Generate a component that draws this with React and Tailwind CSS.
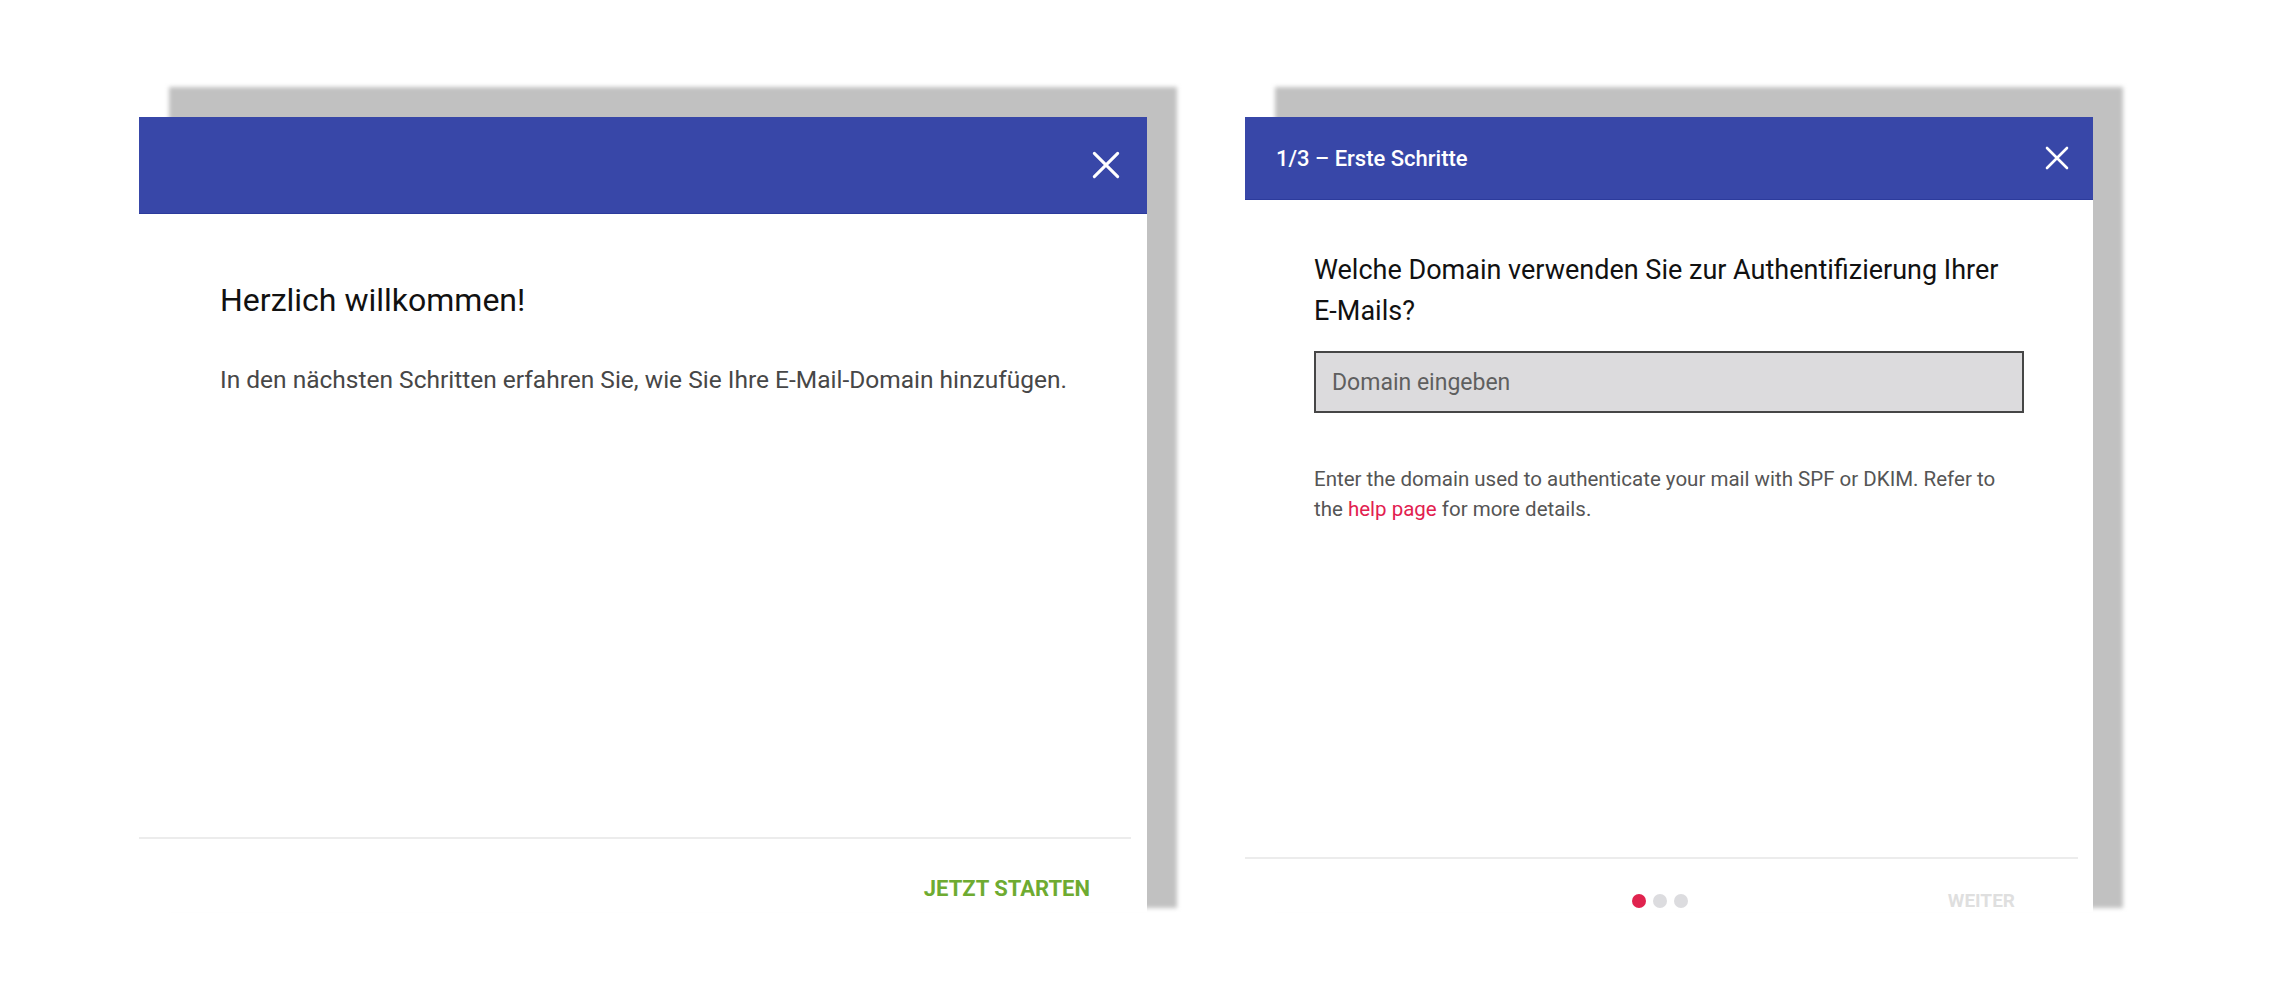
import React from 'react';

const CloseIcon = ({ size = 28 }) => (
  <svg width={size} height={size} viewBox="0 0 24 24" fill="none" stroke="white" strokeWidth="2.6" strokeLinecap="round">
    <path d="M2 2L22 22M22 2L2 22" />
  </svg>
);

// gray block that sits behind each dialog, shifted up and to the right
const Backdrop = () => (
  <div className="absolute -top-[30px] -right-[30px] left-[30px] bottom-[4px] bg-[#c1c1c1] blur-[2px]" />
);

const WelcomeDialog = () => (
  <div className="relative w-[1008px] h-[795px] shrink-0">
    <Backdrop />
    <div className="relative h-full bg-white flex flex-col">
      <div className="h-[97px] bg-[#3847a8] border-b border-[#2c3b9c] flex items-center justify-end pr-[27px]">
        <CloseIcon size={28} />
      </div>
      <div className="flex-1 pl-[81px] pt-[67px]">
        <h2 className="text-[32px] leading-[38px] text-[#111]">Herzlich willkommen!</h2>
        <p className="mt-[44px] text-[24.5px] leading-[33px] text-[#474747]">
          In den nächsten Schritten erfahren Sie, wie Sie Ihre E-Mail-Domain hinzufügen.
        </p>
      </div>
      <div className="h-[2px] bg-[#ececec] mr-[16px]" />
      <div className="h-[73px] flex justify-end pr-[57px] pt-[39px]">
        <button className="text-[22px] leading-[22px] font-bold text-[#6eab31] h-fit">JETZT STARTEN</button>
      </div>
    </div>
  </div>
);

const DomainDialog = () => (
  <div className="relative w-[848px] h-[795px] shrink-0">
    <Backdrop />
    <div className="relative h-full bg-white flex flex-col">
      <div className="h-[83px] bg-[#3847a8] border-b border-[#2c3b9c] flex items-center justify-between pl-[31px] pr-[24px]">
        <span className="text-[22px] font-medium text-white">1/3 – Erste Schritte</span>
        <CloseIcon size={24} />
      </div>
      <div className="flex-1 px-[69px] pt-[50px]">
        <h3 className="text-[27px] leading-[41px] text-[#111]">
          Welche Domain verwenden Sie zur Authentifizierung Ihrer <span className="whitespace-nowrap">E-Mails?</span>
        </h3>
        <input
          type="text"
          placeholder="Domain eingeben"
          className="mt-[19px] w-full h-[62px] bg-[#dcdbdd] border-2 border-[#464646] pl-4 text-[23px] text-[#333] placeholder:text-[#5f5f5f] outline-none"
        />
        <p className="mt-[51px] text-[20.5px] leading-[30px] text-[#555]">
          Enter the domain used to authenticate your mail with SPF or DKIM. Refer to
          <br />
          the <a className="text-[#e2204f]">help page</a> for more details.
        </p>
      </div>
      <div className="h-[2px] bg-[#ececec] mr-[15px]" />
      <div className="h-[53px] flex items-start pt-[35px] pl-[387px] pr-[78px]">
        <div className="flex gap-[7px]">
          <span className="w-[14px] h-[14px] rounded-full bg-[#e0234e]" />
          <span className="w-[14px] h-[14px] rounded-full bg-[#dcdcdf]" />
          <span className="w-[14px] h-[14px] rounded-full bg-[#dcdcdf]" />
        </div>
        <button className="ml-auto -mt-[4px] text-[19px] leading-[22px] font-bold text-[#dfdfdf]">WEITER</button>
      </div>
    </div>
  </div>
);

export default function App() {
  return (
    <div className="w-[2271px] h-[1001px] bg-white flex items-start gap-[98px] pl-[139px] pt-[117px] font-['Roboto',_sans-serif] overflow-hidden">
      <WelcomeDialog />
      <DomainDialog />
    </div>
  );
}
